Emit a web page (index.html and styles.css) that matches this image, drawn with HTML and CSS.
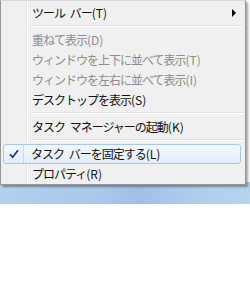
FILE: index.html
```html
<!DOCTYPE html>
<html lang="ja">
<head>
    <meta charset="UTF-8">
    <title>タスク バー メニュー</title>
    <link rel="stylesheet" href="styles.css">
</head>
<body>
    <div class="menu">
        <div class="item has-sub">ツール バー<span class="key">(T)</span><span class="arrow"></span></div>
        <div class="sep"></div>
        <div class="item disabled">重ねて表示<span class="key">(D)</span></div>
        <div class="item disabled">ウィンドウを上下に並べて表示<span class="key">(T)</span></div>
        <div class="item disabled">ウィンドウを左右に並べて表示<span class="key">(I)</span></div>
        <div class="item">デスクトップを表示<span class="key">(S)</span></div>
        <div class="sep"></div>
        <div class="item">タスク マネージャーの起動<span class="key">(K)</span></div>
        <div class="sep"></div>
        <div class="item checked hover">
            <span class="check">
                <svg width="10" height="10" viewBox="0 0 10 10"><path d="M1 5.2 L3.6 8.2 L9 1.2" fill="none" stroke="#1d2a8c" stroke-width="1.7"/></svg>
            </span>タスク バーを固定する<span class="key">(L)</span>
        </div>
        <div class="item">プロパティ<span class="key">(R)</span></div>
    </div>
    <div class="taskbar"></div>
</body>
</html>
```

FILE: styles.css
```css
body {
    margin: 0;
    background: #fff;
    font-family: "Noto Sans CJK JP", "Noto Sans", sans-serif;
    font-size: 12px;
}
.menu {
    position: relative;
    z-index: 1;
    width: 240px;
    margin-bottom: -3px;
    padding: 2px 2px 0 2px;
    border: 1px solid #979797;
    border-top-color: #d8d8d8;
    background: linear-gradient(to right, transparent 25px, #e2e3e3 25px, #e2e3e3 26px, #fff 26px, #fff 27px, transparent 27px), #f0f0f0;
    box-shadow: 2px 2px 2px rgba(0,0,0,0.35);
}
.item {
    position: relative;
    height: 20px;
    line-height: 20px;
    padding-left: 29px;
    color: #111;
    letter-spacing: -1px;
    word-spacing: 3px;
    white-space: nowrap;
}
.key {
    letter-spacing: 0;
}
.item.disabled {
    color: #8d8d8d;
}
.arrow {
    position: absolute;
    right: 7px;
    top: 6px;
    border-left: 4px solid #000;
    border-top: 4px solid transparent;
    border-bottom: 4px solid transparent;
}
.sep {
    height: 7px;
    margin-left: 27px;
    background: linear-gradient(to bottom, transparent 2px, #e0e0e0 2px, #e0e0e0 3px, #fff 3px, #fff 4px, transparent 4px);
}
.hover {
    margin-right: 2px;
    height: 18px;
    line-height: 18px;
    padding-left: 27px;
    border: 1px solid #a8c8eb;
    border-radius: 3px;
    background: linear-gradient(to bottom, #f2f7fd, #e3eefb);
}
.check {
    position: absolute;
    left: 0;
    top: 0;
    width: 20px;
    height: 18px;
    box-sizing: border-box;
    border-right: 1px solid #c5d9f1;
    display: flex;
    align-items: center;
    justify-content: center;
}
.taskbar {
    height: 22px;
    background: linear-gradient(to right, #b2d1ee 0%, #a9c9e9 40%, #9fc0e3 55%, #adcdec 75%, #b6d4ef 100%);
}
```
